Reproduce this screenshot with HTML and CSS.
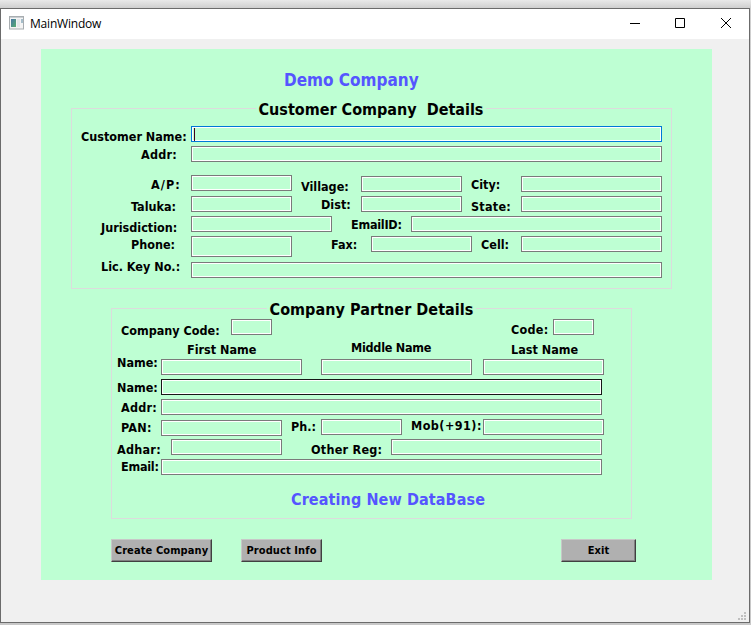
FILE: index.html
```html
<!DOCTYPE html>
<html lang="en">
<head>
<meta charset="utf-8">
<title>MainWindow</title>
<link rel="stylesheet" href="styles.css">
</head>
<body>
<div class="window">
  <header class="titlebar">
    <svg class="app-icon" width="15" height="14" viewBox="0 0 15 14"><defs><linearGradient id="g" x1="0" y1="0" x2="1" y2="1"><stop offset="0" stop-color="#4776a5"/><stop offset="1" stop-color="#57ad70"/></linearGradient></defs><rect x=".5" y=".5" width="14" height="12.5" fill="#f4f4f4" stroke="#a8adb0"/><path d="M1 1.5h13" stroke="#c9ced2"/><rect x="2" y="3" width="5" height="8" fill="url(#g)"/><rect x="8" y="3" width="3" height="8" fill="#e4e7ea"/><rect x="12" y="3" width="2" height="4" fill="#a5bdca"/></svg>
    <span class="title">MainWindow</span>
    <svg class="controls" width="101" height="10" viewBox="0 0 101 10" fill="none" stroke="#000"><path d="M0 5.5h10M45.5.5h9v9h-9z"/><path d="M91 0l10 10M101 0l-10 10"/></svg>
  </header>
  <main class="panel">
    <h1 class="banner">Demo Company</h1>
    <section class="group customer">
      <h2 class="legend">Customer Company&nbsp; Details</h2>
      <div class="row c-name"><label class="b15">Customer Name:</label><i class="field focus"><b class="caret"></b></i></div>
      <div class="row c-addr"><label class="b13 wide">Addr:</label><i class="field"></i></div>
      <div class="row c-place"><label class="b14 wider">A/P:</label><i class="field"></i><label class="b16">Village:</label><i class="field low"></i><label class="b14">City:</label><i class="field low"></i></div>
      <div class="row c-taluka"><label class="b15">Taluka:</label><i class="field"></i><label class="b13">Dist:</label><i class="field"></i><label class="b15 wide">State:</label><i class="field"></i></div>
      <div class="row c-juris"><label class="b16">Jurisdiction:</label><i class="field"></i><label class="b13 tight">EmailID:</label><i class="field"></i></div>
      <div class="row c-phone"><label class="b13">Phone:</label><i class="field tall"></i><label class="b13">Fax:</label><i class="field"></i><label class="b13">Cell:</label><i class="field"></i></div>
      <div class="row c-key"><label class="b9">Lic. Key No.:</label><i class="field"></i></div>
    </section>
    <section class="group partner">
      <h2 class="legend">Company Partner Details</h2>
      <div class="row p-code"><label class="b16">Company Code:</label><i class="field"></i><label class="b15 wide">Code:</label><i class="field"></i></div>
      <div class="row p-heads"><label class="b15">First Name</label><label class="b13 tight">Middle Name</label><label class="b15">Last Name</label></div>
      <div class="row p-names"><label class="b8">Name:</label><i class="field"></i><i class="field"></i><i class="field"></i></div>
      <div class="row p-name"><label class="b13">Name:</label><i class="field dark"></i></div>
      <div class="row p-addr"><label class="b13 wide">Addr:</label><i class="field"></i></div>
      <div class="row p-pan"><label class="b13 wide">PAN:</label><i class="field low"></i><label class="b12">Ph.:</label><i class="field"></i><label class="b11 widest">Mob(+91):</label><i class="field"></i></div>
      <div class="row p-adhar"><label class="b15 wide">Adhar:</label><i class="field"></i><label class="b15 wide">Other Reg:</label><i class="field"></i></div>
      <div class="row p-email"><label class="b12 tight">Email:</label><i class="field"></i></div>
      <p class="status">Creating New DataBase</p>
    </section>
    <footer class="actions">
      <button class="create">Create Company</button>
      <button class="product">Product Info</button>
      <button class="exit">Exit</button>
    </footer>
  </main>
  <svg class="grip" width="8" height="8" viewBox="0 0 8 8" fill="#bfbfbf"><path d="M6 0h2v2H6zM3 3h2v2H3zM6 3h2v2H6zM0 6h2v2H0zM3 6h2v2H3zM6 6h2v2H6z"/></svg>
</div>
</body>
</html>
```
FILE: styles.css
```css
* { box-sizing: border-box; }
body { margin: 0; height: 625px; overflow: hidden; padding-top: 8px; background: linear-gradient(#e9e9e9, #cfcfcf 8px, #c8c8c8); font-family: "DejaVu Sans Condensed", "DejaVu Sans", sans-serif; font-stretch: condensed; }
.window { width: 750px; height: 615px; border: 1px solid #6b6b6b; background: #f0f0f0; display: flow-root; position: relative; }
.titlebar { height: 30px; background: #fff; display: flex; align-items: flex-start; padding-left: 8px; }
.app-icon { margin-top: 7px; }
.title { margin: 7px 0 0 6px; font: 12px/16px "Open Sans", sans-serif; letter-spacing: -0.2px; color: #000; width: 600px; }
.controls { margin-top: 9px; flex: none; }
.panel { width: 671px; height: 531px; margin: 10px 0 0 40px; background: #beffd3; display: flow-root; }
.banner, .status { margin: 0; color: #5555ff; font-size: 16px; line-height: 22px; font-weight: 700; white-space: nowrap; }
.banner { padding-left: 243px; margin-top: 20px; font-size: 17px; }
.group { border: 1px solid #dcdcdc; }
.legend { height: 20px; margin: -10px 0 0; background: #beffd3; font-size: 16px; line-height: 22px; font-weight: 700; text-align: center; white-space: nowrap; }
.customer { width: 601px; height: 181px; margin: 17px 0 0 30px; }
.customer .legend { width: 230px; margin-left: 184px; }
.partner { width: 521px; height: 211px; margin: 19px 0 0 70px; }
.partner .legend { width: 209px; margin-left: 155px; letter-spacing: 0.05px; }
.row { display: grid; height: 20px; align-items: start; font-size: 12.5px; line-height: 16px; font-weight: 700; white-space: nowrap; }
.tight { letter-spacing: -0.25px; }
.wide { letter-spacing: 0.25px; }
.wider { letter-spacing: 1.1px; }
.widest { letter-spacing: 0.45px; }
.field { height: 16px; border: 1px solid #7a7a7a; box-shadow: inset 0 0 0 1px #fff; }
.focus { border-color: #0078d7; }
.dark { border-color: #171717; }
.low { margin-top: 1px; }
.tall { height: 21px; }
.caret { display: block; width: 1px; height: 13px; margin: 1px 0 0 2px; background: #400020; }
.b8 { margin-top: -4px; }
.b9 { margin-top: -3px; }
.b11 { margin-top: -1px; }
.b12 { margin-top: 0; }
.b13 { margin-top: 1px; }
.b14 { margin-top: 2px; }
.b15 { margin-top: 3px; }
.b16 { margin-top: 4px; }
.c-name { grid-template-columns: 110px 471px; margin: 7px 0 0 9px; }
.c-addr { grid-template-columns: 50px 471px; margin-left: 69px; height: 29px; }
.c-place { grid-template-columns: 40px 101px 69px 101px 59px 141px; margin-left: 79px; height: 21px; }
.c-place label:nth-of-type(n+2) { padding-left: 9px; }
.c-taluka { grid-template-columns: 60px 101px 69px 101px 59px 141px; margin-left: 59px; }
.c-taluka label:nth-of-type(2) { padding-left: 29px; }
.c-taluka label:nth-of-type(3) { padding-left: 9px; }
.c-juris { grid-template-columns: 90px 141px 79px 251px; margin-left: 29px; }
.c-juris label:nth-of-type(2) { padding-left: 19px; }
.c-phone { grid-template-columns: 60px 101px 79px 101px 49px 141px; margin-left: 59px; height: 26px; }
.c-phone label:nth-of-type(2) { padding-left: 39px; }
.c-phone label:nth-of-type(3) { padding-left: 9px; }
.c-key { grid-template-columns: 90px 471px; margin-left: 29px; }
.p-code { grid-template-columns: 110px 41px 281px 41px; margin-left: 9px; }
.p-code label:nth-of-type(2) { padding-left: 239px; }
.p-heads { grid-template-columns: 164px 160px 80px; margin-left: 75px; }
.p-names { grid-template-columns: 44px 160px 162px 121px; margin-left: 5px; }
.p-names .field:nth-of-type(1) { width: 141px; }
.p-names .field:nth-of-type(2) { width: 151px; }
.p-name { grid-template-columns: 44px 441px; margin-left: 5px; }
.p-addr, .p-email { grid-template-columns: 40px 441px; margin-left: 9px; }
.p-pan { grid-template-columns: 40px 121px 39px 81px 81px 121px; margin-left: 9px; }
.p-pan label:nth-of-type(n+2) { padding-left: 9px; }
.p-adhar { grid-template-columns: 54px 111px 109px 211px; margin-left: 5px; }
.p-adhar label:nth-of-type(2) { padding-left: 29px; }
.status { padding-left: 179px; margin-top: 10px; letter-spacing: 0.1px; }
.actions { display: flex; margin: 20px 0 0 70px; }
button { height: 23px; padding: 0; border: 1px solid; border-color: #c8c8c8 #404040 #404040 #c8c8c8; box-shadow: inset -1px -1px #808080; background: #b0b0b0; color: #000; font: 700 11px/20px "DejaVu Sans Condensed", "DejaVu Sans", sans-serif; font-stretch: condensed; letter-spacing: 0.1px; white-space: nowrap; }
.create { width: 101px; }
.product { width: 81px; margin-left: 29px; }
.exit { width: 75px; margin-left: 239px; }
.grip { position: absolute; right: 3px; bottom: 2px; }
```
